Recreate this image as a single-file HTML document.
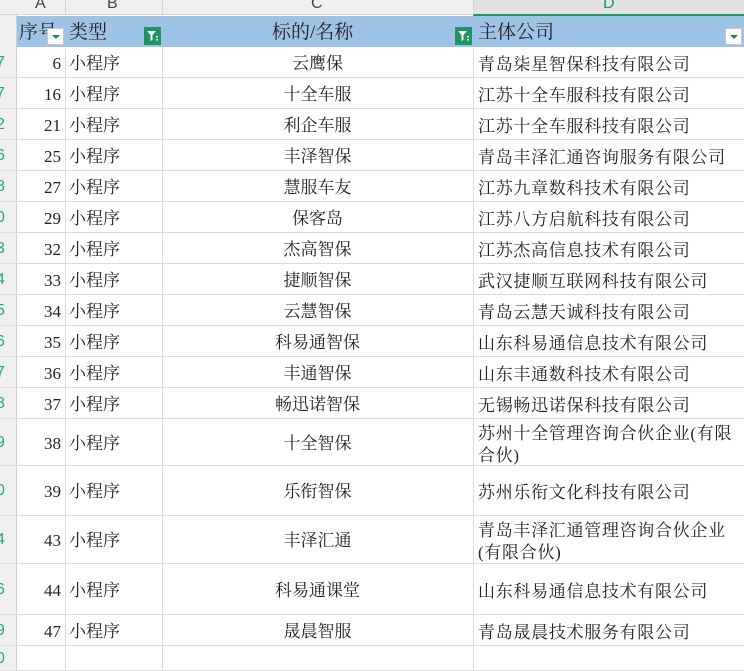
<!DOCTYPE html><html><head><meta charset="utf-8"><style>
body{margin:0;width:744px;height:671px;overflow:hidden;background:#fff;font-family:"Liberation Serif","Noto Serif CJK SC",serif;position:relative}
.a{position:absolute;box-sizing:border-box}
.t{font-size:17px;color:#222;line-height:20px}
.rh{background:#efefef}
.rn{color:#2aa37b;font-size:16px;font-family:"Liberation Sans",sans-serif}
.fb{position:absolute;width:17px;height:17px;background:#fff;border:1px solid #c8c8c8;box-sizing:border-box}
.fb:after{content:"";position:absolute;left:4px;top:6px;border-left:4px solid transparent;border-right:4px solid transparent;border-top:4px solid #1a8a5a}
.gf{position:absolute;width:17px;height:18px;background:#1e9563}
</style></head><body>
<div class="a" style="left:0;top:0;width:744px;height:15px;background:#efefef;border-bottom:1px solid #d6d6d6"></div>
<div class="a" style="left:473px;top:0;width:271px;height:16px;background:#e2e2e2;border-bottom:2px solid #1e9563"></div>
<div class="a" style="left:35px;top:-5px;font:16px 'Liberation Sans',sans-serif;color:#444">A</div>
<div class="a" style="left:107px;top:-5px;font:16px 'Liberation Sans',sans-serif;color:#444">B</div>
<div class="a" style="left:311px;top:-5px;font:16px 'Liberation Sans',sans-serif;color:#444">C</div>
<div class="a" style="left:603px;top:-5px;font:16px 'Liberation Sans',sans-serif;color:#1e9563">D</div>
<div class="a" style="left:65px;top:0;width:1px;height:15px;background:#d6d6d6"></div>
<div class="a" style="left:162px;top:0;width:1px;height:15px;background:#d6d6d6"></div>
<div class="a" style="left:473px;top:0;width:1px;height:15px;background:#d6d6d6"></div>
<div class="a rh" style="left:0;top:15px;width:17px;height:656px;border-right:1px solid #d0d0d0"></div>
<div class="a" style="left:17px;top:16px;width:727px;height:31px;background:#9dc3e6"></div>
<div class="a t" style="left:19px;top:23px;font-size:19px">序号</div>
<div class="fb" style="left:47px;top:28px"></div>
<div class="a t" style="left:69px;top:23px;font-size:19px">类型</div>
<div class="gf" style="left:144px;top:27px"><svg width="17" height="18"><path d="M3 4h9l-3.5 4v5l-2 1v-6z" fill="#fff"/><rect x="12" y="9" width="2" height="1.5" fill="#fff"/><rect x="12" y="12" width="2" height="1.5" fill="#fff"/></svg></div>
<div class="a t" style="left:272px;top:23px;font-size:19px">标的/名称</div>
<div class="gf" style="left:455px;top:27px"><svg width="17" height="18"><path d="M3 4h9l-3.5 4v5l-2 1v-6z" fill="#fff"/><rect x="12" y="9" width="2" height="1.5" fill="#fff"/><rect x="12" y="12" width="2" height="1.5" fill="#fff"/></svg></div>
<div class="a t" style="left:478px;top:23px;font-size:19px">主体公司</div>
<div class="fb" style="left:725px;top:28px"></div>
<div id="rows"></div>
<script>
var tops=[47,78,109,140,171,202,233,264,295,326,357,388,419,466,516,564,615,646,671];
var rn=["7","7","2","6","8","0","3","4","5","6","7","8","9","0","4","6","9","0"];
var d=[["6","云鹰保","青岛柒星智保科技有限公司"],["16","十全车服","江苏十全车服科技有限公司"],["21","利企车服","江苏十全车服科技有限公司"],["25","丰泽智保","青岛丰泽汇通咨询服务有限公司"],["27","慧服车友","江苏九章数科技术有限公司"],["29","保客岛","江苏八方启航科技有限公司"],["32","杰高智保","江苏杰高信息技术有限公司"],["33","捷顺智保","武汉捷顺互联网科技有限公司"],["34","云慧智保","青岛云慧天诚科技有限公司"],["35","科易通智保","山东科易通信息技术有限公司"],["36","丰通智保","山东丰通数科技术有限公司"],["37","畅迅诺智保","无锡畅迅诺保科技有限公司"],["38","十全智保","苏州十全管理咨询合伙企业(有限合伙)"],["39","乐衔智保","苏州乐衔文化科技有限公司"],["43","丰泽汇通","青岛丰泽汇通管理咨询合伙企业(有限合伙)"],["44","科易通课堂","山东科易通信息技术有限公司"],["47","晟晨智服","青岛晟晨技术服务有限公司"]];
var h="";
for(var i=0;i<18;i++){var t=tops[i],b=tops[i+1],hh=b-t,mid=t+hh/2+2;
h+='<div class="a" style="left:0;top:'+(b-1)+'px;width:744px;height:1px;background:#dcdcdc"></div>';
h+='<div class="a rn" style="left:-4px;top:'+(mid-11)+'px">'+rn[i]+'</div>';
if(i<17){var r=d[i];
h+='<div class="a t" style="left:17px;width:44px;text-align:right;top:'+(mid-11)+'px">'+r[0]+'</div>';
h+='<div class="a t" style="left:69px;top:'+(mid-11)+'px">小程序</div>';
h+='<div class="a t" style="left:162px;width:311px;text-align:center;top:'+(mid-11)+'px">'+r[1]+'</div>';
var two=r[2].length>16;
h+='<div class="a t" style="left:478px;width:264px;letter-spacing:0.7px;top:'+(two?mid-22:mid-11)+'px;line-height:22px">'+r[2]+'</div>';}
}
h+='<div class="a" style="left:65px;top:47px;width:1px;height:624px;background:#dcdcdc"></div>';
h+='<div class="a" style="left:162px;top:47px;width:1px;height:624px;background:#dcdcdc"></div>';
h+='<div class="a" style="left:473px;top:47px;width:1px;height:624px;background:#dcdcdc"></div>';
document.getElementById("rows").innerHTML=h;
</script>
</body></html>
